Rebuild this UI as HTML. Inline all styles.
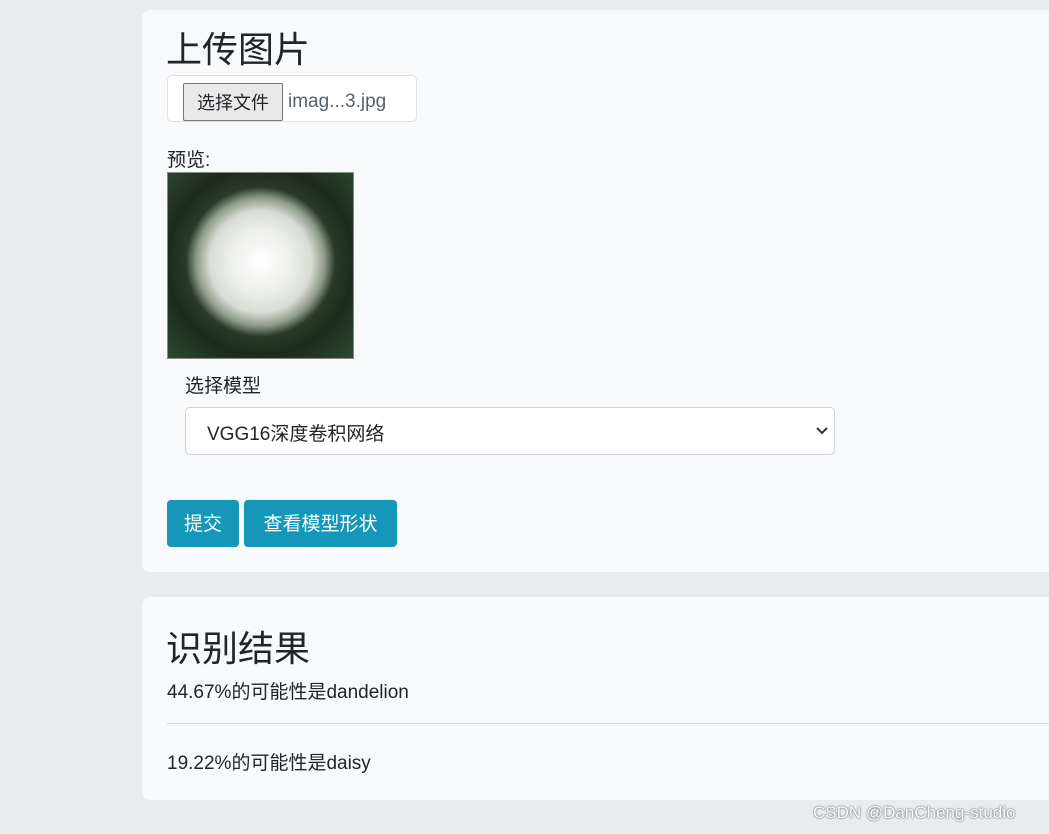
<!DOCTYPE html>
<html><head><meta charset="utf-8"><style>
body{margin:0;width:1049px;height:834px;background:#e9ecef;font-family:"Liberation Sans","Noto Sans CJK SC",sans-serif;color:#212529;position:relative;overflow:hidden}
.card{position:absolute;left:142px;width:920px;background:#f8f9fa;border-radius:8px}
.a{position:absolute;white-space:nowrap}
.btn{position:absolute;background:#1497b9;color:#fff;border-radius:4px;font-size:19px;text-align:center;line-height:47px;top:500px;height:47px}
</style></head><body>
<div class="card" style="top:10px;height:562px"></div>
<div class="card" style="top:597px;height:203px"></div>
<div class="a" style="left:166px;top:21px;font-size:36px;font-weight:400">上传图片</div>
<div class="a" style="left:167px;top:75px;width:248px;height:45px;border:1px solid #dee2e6;border-radius:5px;background:#fff"></div>
<div class="a" style="left:183px;top:83px;width:98px;height:36px;border:1px solid #767676;border-radius:2px;background:#e9e9e9;font-size:18px;line-height:38px;text-align:center">选择文件</div>
<div class="a" style="left:288px;top:91px;font-size:19px;color:#555f6a">imag...3.jpg</div>
<div class="a" style="left:167px;top:145px;font-size:19px">预览:</div>
<div class="a" style="left:167px;top:172px;width:185px;height:185px;border:1px solid #888;background:radial-gradient(circle at 50% 48%,#fff 0,#eef0ec 22%,#d9dcd6 38%,#8e9a8a 48%,#2a3a2a 56%,#1e2a1e 70%,#2c4a30 100%)"></div>
<div class="a" style="left:185px;top:371px;font-size:19px">选择模型</div>
<div class="a" style="left:185px;top:407px;width:648px;height:46px;border:1px solid #ced4da;border-radius:5px;background:#fff"></div>
<div class="a" style="left:207px;top:419px;font-size:19px">VGG16深度卷积网络</div>
<svg class="a" style="left:816px;top:426px" width="12" height="10"><path d="M1 2l5 5 5-5" stroke="#333" stroke-width="2" fill="none"/></svg>
<div class="btn" style="left:167px;width:72px;line-height:49px">提交</div>
<div class="btn" style="left:244px;width:153px;line-height:49px">查看模型形状</div>
<div class="a" style="left:166px;top:620px;font-size:36px;font-weight:400">识别结果</div>
<div class="a" style="left:167px;top:677px;font-size:19px">44.67%的可能性是dandelion</div>
<div class="a" style="left:167px;top:723px;width:882px;height:1px;background:#d6d8db"></div>
<div class="a" style="left:167px;top:748px;font-size:19px">19.22%的可能性是daisy</div>
<div class="a" style="left:813px;top:803px;font-size:17px;color:#fff;text-shadow:0 0 1px #555,0 0 2px #777">CSDN @DanCheng-studio</div>
</body></html>
